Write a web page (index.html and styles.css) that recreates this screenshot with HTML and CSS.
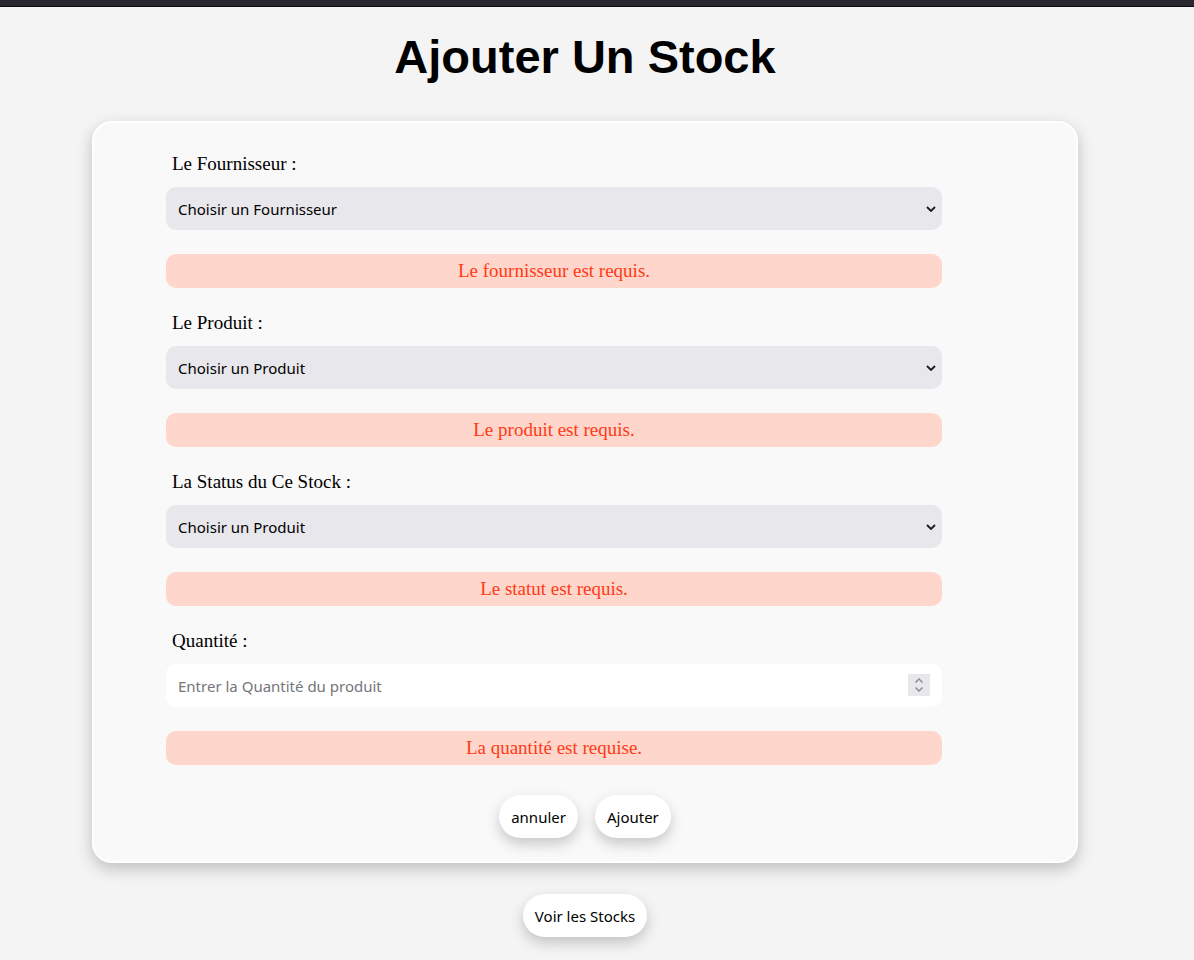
FILE: index.html
```html
<!DOCTYPE html>
<html lang="fr">
<head>
<meta charset="utf-8">
<title>Ajouter Un Stock</title>
<link rel="stylesheet" href="styles.css">
</head>
<body>
<div class="topbar"></div>
<main class="page">
  <h1 class="title">Ajouter Un Stock</h1>
  <form class="card">
    <div class="group">
      <label class="label">Le Fournisseur :</label>
      <div class="select-wrap">
        <select class="field select"><option>Choisir un Fournisseur</option></select>
        <svg class="chev" width="10" height="6" viewBox="0 0 10 6"><path d="M1 1l4 4 4-4" fill="none" stroke="#1a1a1a" stroke-width="1.8"/></svg>
      </div>
      <div class="error">Le fournisseur est requis.</div>
    </div>
    <div class="group">
      <label class="label">Le Produit :</label>
      <div class="select-wrap">
        <select class="field select"><option>Choisir un Produit</option></select>
        <svg class="chev" width="10" height="6" viewBox="0 0 10 6"><path d="M1 1l4 4 4-4" fill="none" stroke="#1a1a1a" stroke-width="1.8"/></svg>
      </div>
      <div class="error">Le produit est requis.</div>
    </div>
    <div class="group">
      <label class="label">La Status du Ce Stock :</label>
      <div class="select-wrap">
        <select class="field select"><option>Choisir un Produit</option></select>
        <svg class="chev" width="10" height="6" viewBox="0 0 10 6"><path d="M1 1l4 4 4-4" fill="none" stroke="#1a1a1a" stroke-width="1.8"/></svg>
      </div>
      <div class="error">Le statut est requis.</div>
    </div>
    <div class="group">
      <label class="label">Quantité :</label>
      <div class="select-wrap">
        <input class="field input" type="number" placeholder="Entrer la Quantité du produit">
        <span class="spin"><svg width="12" height="18" viewBox="0 0 12 18"><path d="M2.5 6.5L6 3l3.5 3.5M2.5 11.5L6 15l3.5-3.5" fill="none" stroke="#8a8792" stroke-width="1.4"/></svg></span>
      </div>
      <div class="error">La quantité est requise.</div>
    </div>
    <div class="actions">
      <button type="button" class="btn">annuler</button>
      <button type="button" class="btn">Ajouter</button>
    </div>
  </form>
  <div class="bottom">
    <button type="button" class="btn">Voir les Stocks</button>
  </div>
</main>
</body>
</html>
```

FILE: styles.css
```css
html, body {
  margin: 0;
  padding: 0;
}
body {
  background: #f4f4f4;
  font-family: "Liberation Serif", "Times New Roman", serif;
  height: 960px;
  overflow: hidden;
}
.topbar {
  height: 6px;
  background: #29272f;
  border-bottom: 1px solid #0e0d10;
}
.page {
  width: 1170px;
  display: flex;
  flex-direction: column;
  align-items: center;
}
.title {
  font-family: "Liberation Sans", Arial, sans-serif;
  font-weight: bold;
  font-size: 47px;
  line-height: 55px;
  margin: 22px 0 37px;
  color: #000;
}
.card {
  box-sizing: border-box;
  width: 986px;
  background: #f9f9f9;
  border: 2px solid #ffffff;
  border-radius: 20px;
  box-shadow: 0 6px 16px rgba(0, 0, 0, 0.22);
  padding: 30px 0 23px 72px;
  display: flex;
  flex-direction: column;
}
.group {
  width: 776px;
  display: flex;
  flex-direction: column;
  margin-bottom: 24px;
}
.label {
  font-size: 19px;
  line-height: 22px;
  padding-left: 6px;
  color: #000;
  margin-bottom: 12px;
}
.select-wrap {
  position: relative;
  height: 43px;
}
.field {
  box-sizing: border-box;
  width: 100%;
  height: 43px;
  border: none;
  border-radius: 10px;
  font-family: "Noto Sans", "Open Sans", sans-serif;
  font-size: 15px;
  color: #000;
  padding: 0 12px;
  outline: none;
  margin: 0;
}
.select {
  appearance: none;
  -webkit-appearance: none;
  background: #e8e7ec;
}
.input {
  background: #ffffff;
  -moz-appearance: textfield;
}
.input::placeholder {
  color: #75757a;
}
.input::-webkit-inner-spin-button,
.input::-webkit-outer-spin-button {
  -webkit-appearance: none;
  margin: 0;
}
.chev {
  position: absolute;
  right: 6px;
  top: 19px;
}
.spin {
  position: absolute;
  right: 12px;
  top: 10px;
  width: 22px;
  height: 22px;
  background: #e8e7ec;
  display: flex;
  align-items: center;
  justify-content: center;
}
.error {
  margin-top: 24px;
  height: 34px;
  border-radius: 10px;
  background: #ffd6cc;
  color: #ff3a14;
  font-size: 19px;
  line-height: 34px;
  text-align: center;
}
.actions {
  display: flex;
  justify-content: center;
  gap: 17px;
  margin-left: -72px;
  margin-top: 6px;
}
.btn {
  height: 43px;
  padding: 0 12px;
  border: none;
  border-radius: 22px;
  background: #ffffff;
  font-family: "Noto Sans", "Open Sans", sans-serif;
  font-size: 15px;
  color: #000;
  box-shadow: 0 6px 14px rgba(0, 0, 0, 0.2);
  cursor: pointer;
}
.bottom {
  margin-top: 31px;
}
```
